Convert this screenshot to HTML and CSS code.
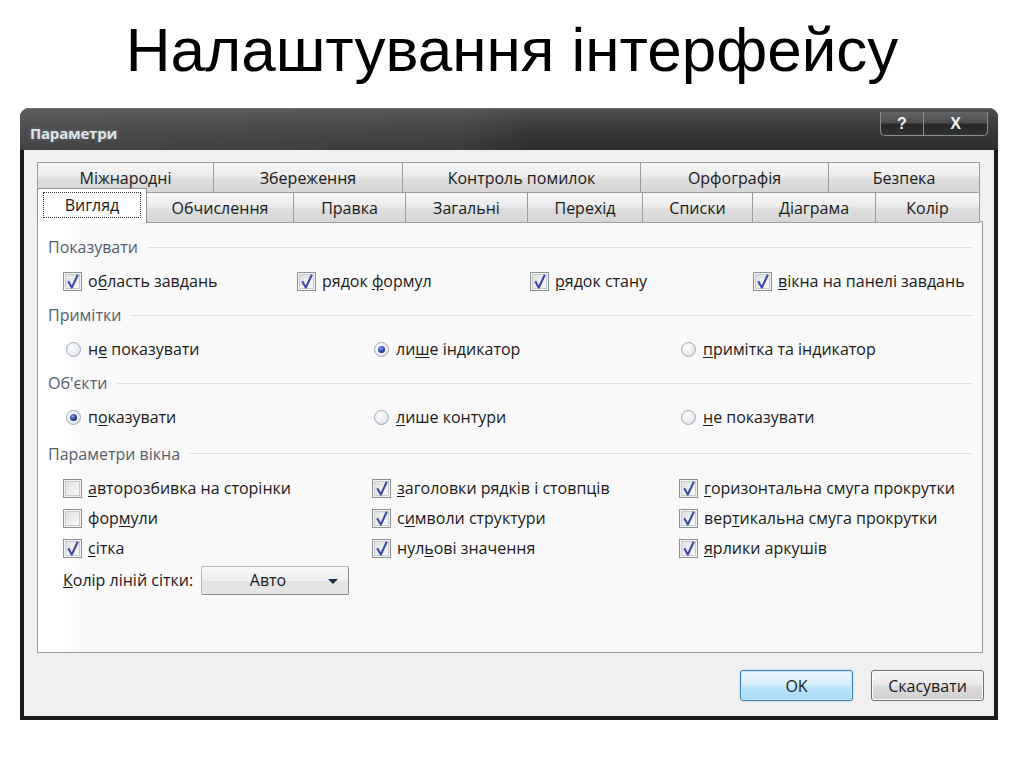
FILE: index.html
```html
<!DOCTYPE html>
<html lang="uk">
<head>
<meta charset="utf-8">
<title>Налаштування інтерфейсу</title>
<link rel="stylesheet" href="styles.css">
</head>
<body>
<h1 class="slide-title">Налаштування інтерфейсу</h1>
<div class="window">
  <div class="titlebar">
    <span class="caption">Параметри</span>
    <div class="caption-buttons">
      <span class="cbtn help">?</span><span class="cbtn close">X</span>
    </div>
  </div>
  <div class="client">
    <div class="tabs">
      <div class="tabrow row-back">
        <div class="tab">Міжнародні</div>
        <div class="tab">Збереження</div>
        <div class="tab">Контроль помилок</div>
        <div class="tab">Орфографія</div>
        <div class="tab">Безпека</div>
      </div>
      <div class="tabrow row-front">
        <div class="tab active"><span class="focus">Вигляд</span></div>
        <div class="tab">Обчислення</div>
        <div class="tab">Правка</div>
        <div class="tab">Загальні</div>
        <div class="tab">Перехід</div>
        <div class="tab">Списки</div>
        <div class="tab">Діаграма</div>
        <div class="tab">Колір</div>
      </div>
    </div>
    <div class="panel">
      <div class="group-label"><span>Показувати</span></div>
      <div class="opt-row cols-show">
        <label class="opt"><span class="cb checked"></span><span>о<u>б</u>ласть завдань</span></label>
        <label class="opt"><span class="cb checked"></span><span>рядок <u>ф</u>ормул</span></label>
        <label class="opt"><span class="cb checked"></span><span><u>р</u>ядок стану</span></label>
        <label class="opt"><span class="cb checked"></span><span><u>в</u>ікна на панелі завдань</span></label>
      </div>
      <div class="group-label"><span>Примітки</span></div>
      <div class="opt-row cols-radio">
        <label class="opt"><span class="rb"></span><span>н<u>е</u> показувати</span></label>
        <label class="opt"><span class="rb selected"></span><span>ли<u>ш</u>е індикатор</span></label>
        <label class="opt"><span class="rb"></span><span><u>п</u>римітка та індикатор</span></label>
      </div>
      <div class="group-label"><span>Об'єкти</span></div>
      <div class="opt-row cols-radio">
        <label class="opt"><span class="rb selected"></span><span>п<u>о</u>казувати</span></label>
        <label class="opt"><span class="rb"></span><span><u>л</u>ише контури</span></label>
        <label class="opt"><span class="rb"></span><span><u>н</u>е показувати</span></label>
      </div>
      <div class="group-label wide"><span>Параметри вікна</span></div>
      <div class="opt-grid">
        <label class="opt"><span class="cb"></span><span><u>а</u>второзбивка на сторінки</span></label>
        <label class="opt"><span class="cb checked"></span><span><u>з</u>аголовки рядків і стовпців</span></label>
        <label class="opt"><span class="cb checked"></span><span><u>г</u>оризонтальна смуга прокрутки</span></label>
        <label class="opt"><span class="cb"></span><span>фор<u>м</u>ули</span></label>
        <label class="opt"><span class="cb checked"></span><span>с<u>и</u>мволи структури</span></label>
        <label class="opt"><span class="cb checked"></span><span>вер<u>т</u>икальна смуга прокрутки</span></label>
        <label class="opt"><span class="cb checked"></span><span><u>с</u>ітка</span></label>
        <label class="opt"><span class="cb checked"></span><span>нул<u>ь</u>ові значення</span></label>
        <label class="opt"><span class="cb checked"></span><span><u>я</u>рлики аркушів</span></label>
      </div>
      <div class="color-row">
        <span class="color-label"><u>К</u>олір ліній сітки:</span>
        <div class="combo"><span class="combo-value">Авто</span><span class="combo-arrow"></span></div>
      </div>
    </div>
    <div class="buttons">
      <button class="btn default">OK</button>
      <button class="btn">Скасувати</button>
    </div>
  </div>
</div>
</body>
</html>
```

FILE: styles.css
```css
* { box-sizing: border-box; }

html, body {
  margin: 0;
  padding: 0;
  background: #ffffff;
}

body {
  width: 1024px;
  height: 768px;
  overflow: hidden;
  font-family: "Open Sans", "DejaVu Sans", sans-serif;
  font-size: 16px;
  color: #1a1a1a;
}

.slide-title {
  margin: 0;
  height: 108px;
  padding-top: 15px;
  font-family: "Liberation Sans", Arial, sans-serif;
  font-weight: normal;
  font-size: 62px;
  line-height: 69px;
  text-align: center;
  color: #000;
}

/* ---------- window ---------- */
.window {
  margin-left: 20px;
  width: 978px;
  height: 612px;
  background: #1b1d1d;
  border-radius: 9px 9px 0 0;
  padding: 0 4px 4px 4px;
  display: flex;
  flex-direction: column;
}

.titlebar {
  height: 42px;
  margin: 0 -4px;
  padding: 0 10px 0 10px;
  border-radius: 9px 9px 0 0;
  background:
    linear-gradient(100deg, rgba(255,255,255,0.10) 0%, rgba(255,255,255,0.06) 45%, rgba(255,255,255,0) 52%),
    linear-gradient(#4b4d4e 0%, #3a3c3d 40%, #2c2e2f 100%);
  display: flex;
  justify-content: space-between;
  align-items: flex-start;
  border-top: 1px solid #6a6c6d;
}

.caption {
  margin-top: 14px;
  font-weight: 700;
  font-size: 15px;
  color: #dfe6ea;
  letter-spacing: -0.2px;
  text-shadow: 0 0 4px rgba(255,255,255,0.25);
}

.caption-buttons {
  display: flex;
  margin-top: 3px;
}

.cbtn {
  height: 24px;
  display: flex;
  align-items: center;
  justify-content: center;
  color: #f2f2f2;
  font-family: "Liberation Sans", Arial, sans-serif;
  font-weight: 700;
  font-size: 16px;
  border: 1px solid #8a8c8e;
  border-top: 0;
  background: linear-gradient(#626465 0%, #4d4f50 45%, #262828 55%, #303232 100%);
}

.cbtn.help {
  width: 43px;
  border-radius: 0 0 0 5px;
  border-right: 0;
}

.cbtn.close {
  width: 65px;
  border-radius: 0 0 5px 0;
}

.client {
  flex: 1;
  background: #f0f0f0;
  padding: 12px 10px 0 13px;
  display: flex;
  flex-direction: column;
}

/* ---------- tabs ---------- */
.tabs {
  display: flex;
  flex-direction: column;
  position: relative;
  z-index: 2;
}

.tabrow {
  display: grid;
  height: 30px;
  width: 943px;
}

.row-back {
  grid-template-columns: 176px 189px 238px 188px 152px;
}

.row-front {
  grid-template-columns: 110px 146px 112px 122px 115px 110px 123px 105px;
}

.tab {
  display: flex;
  align-items: center;
  justify-content: center;
  border: 1px solid #9c9c9c;
  border-right: 0;
  border-bottom: 0;
  background: linear-gradient(#f7f7f7 0%, #ececec 45%, #dedede 55%, #d6d6d6 100%);
  color: #1a1a1a;
  white-space: nowrap;
}

.tab:last-child {
  border-right: 1px solid #9c9c9c;
}

.row-front .tab {
  border-bottom: 1px solid #9c9c9c;
}

.tab.active {
  margin-top: -4px;
  height: 35px;
  background: #ffffff;
  border: 1px solid #8c8e94;
  border-bottom: 0;
  align-items: flex-start;
  padding-top: 3px;
}

.tab.active + .tab {
  border-left: 0;
}

.focus {
  display: flex;
  align-items: center;
  justify-content: center;
  width: 98px;
  height: 26px;
  border: 1px dotted #3a3a3a;
}

/* ---------- panel ---------- */
.panel {
  height: 432px;
  width: 946px;
  margin-top: -1px;
  border: 1px solid #9c9c9c;
  background: linear-gradient(to right, #ffffff 0px, #ffffff 22px, #f9f9f9 40px, #f9f9f9 100%);
  padding: 8px 10px 0 10px;
  position: relative;
  z-index: 1;
}

.group-label {
  height: 34px;
  display: flex;
  align-items: center;
  color: #55606e;
}

.group-label.wide {
  height: 35px;
  margin-top: 2px;
}

.group-label::after {
  content: "";
  flex: 1;
  margin-left: 10px;
  border-top: 1px solid #d9e1e6;
}

.opt-row {
  height: 34px;
  display: grid;
  align-items: center;
  padding-left: 15px;
}

.cols-show {
  grid-template-columns: 234px 233px 223px auto;
}

.cols-radio {
  padding-left: 18px;
  grid-template-columns: 308px 307px auto;
}

.opt-grid {
  margin-top: 2px;
  padding-left: 15px;
  display: grid;
  grid-template-columns: 309px 307px auto;
  grid-auto-rows: 30px;
  align-items: center;
}

.opt {
  display: flex;
  align-items: center;
  white-space: nowrap;
}

.opt u {
  text-underline-offset: 2px;
}

.cb {
  width: 19px;
  height: 19px;
  flex: none;
  margin-right: 6px;
  border: 1px solid #8f9091;
  background: linear-gradient(135deg, #d7d9dc 0%, #eceeef 50%, #fbfbfb 100%);
  box-shadow: inset 0 0 0 1px #f4f4f4, inset 0 0 0 2px #c8ccd0;
  position: relative;
}

.cb.checked::after {
  content: "";
  position: absolute;
  left: 3px;
  top: 1px;
  width: 12px;
  height: 15px;
  background: url("data:image/svg+xml;utf8,<svg xmlns='http://www.w3.org/2000/svg' width='12' height='15' viewBox='0 0 12 15'><path d='M1.2 7.2 L4.8 13.6 L10.8 0.8' fill='none' stroke='%233d48a8' stroke-width='2.1' stroke-linejoin='round'/></svg>") no-repeat;
}

.rb {
  width: 15px;
  height: 15px;
  flex: none;
  margin-right: 7px;
  border-radius: 50%;
  border: 1px solid #a5a9ad;
  background: radial-gradient(circle at 40% 35%, #ffffff 0%, #e9eef3 55%, #c9d4de 100%);
  position: relative;
}

.rb.selected::after {
  content: "";
  position: absolute;
  left: 3px;
  top: 3px;
  width: 7px;
  height: 7px;
  border-radius: 50%;
  background: radial-gradient(circle at 40% 35%, #8f9de8 0%, #2b3a9e 55%, #141d66 100%);
}

.color-row {
  height: 34px;
  display: flex;
  align-items: center;
  padding-left: 15px;
}

.color-label {
  width: 138px;
  white-space: nowrap;
}

.combo {
  width: 148px;
  height: 29px;
  display: flex;
  align-items: center;
  border: 1px solid #b9b9b9;
  border-right-color: #8a8a8a;
  border-bottom-color: #8a8a8a;
  border-radius: 2px;
  background: linear-gradient(#f7f7f7 0%, #efefef 50%, #e3e3e3 51%, #e6e6e6 100%);
}

.combo-value {
  flex: 1;
  text-align: center;
  padding-left: 6px;
}

.combo-arrow {
  width: 0;
  height: 0;
  margin: 2px 10px 0 0;
  border-left: 5px solid transparent;
  border-right: 5px solid transparent;
  border-top: 5px solid #1e2a44;
}

/* ---------- buttons ---------- */
.buttons {
  display: flex;
  justify-content: flex-end;
  gap: 18px;
  padding-top: 17px;
  padding-right: 0;
}

.btn {
  width: 113px;
  height: 31px;
  font-family: inherit;
  font-size: 16px;
  color: #1a1a1a;
  border: 1px solid #707070;
  border-radius: 3px;
  background: linear-gradient(#f4f4f4 0%, #ebebeb 48%, #dddddd 52%, #cfcfcf 100%);
  box-shadow: inset 0 0 0 1px #fbfbfb;
  padding: 0;
}

.btn.default {
  border-color: #3c7fb1;
  background: linear-gradient(#e8f5fd 0%, #d9f0fc 48%, #bee6fd 52%, #a7d9f5 100%);
  box-shadow: inset 0 0 0 1px #c3e6fa, 0 0 2px rgba(60,127,177,0.4);
}
```
